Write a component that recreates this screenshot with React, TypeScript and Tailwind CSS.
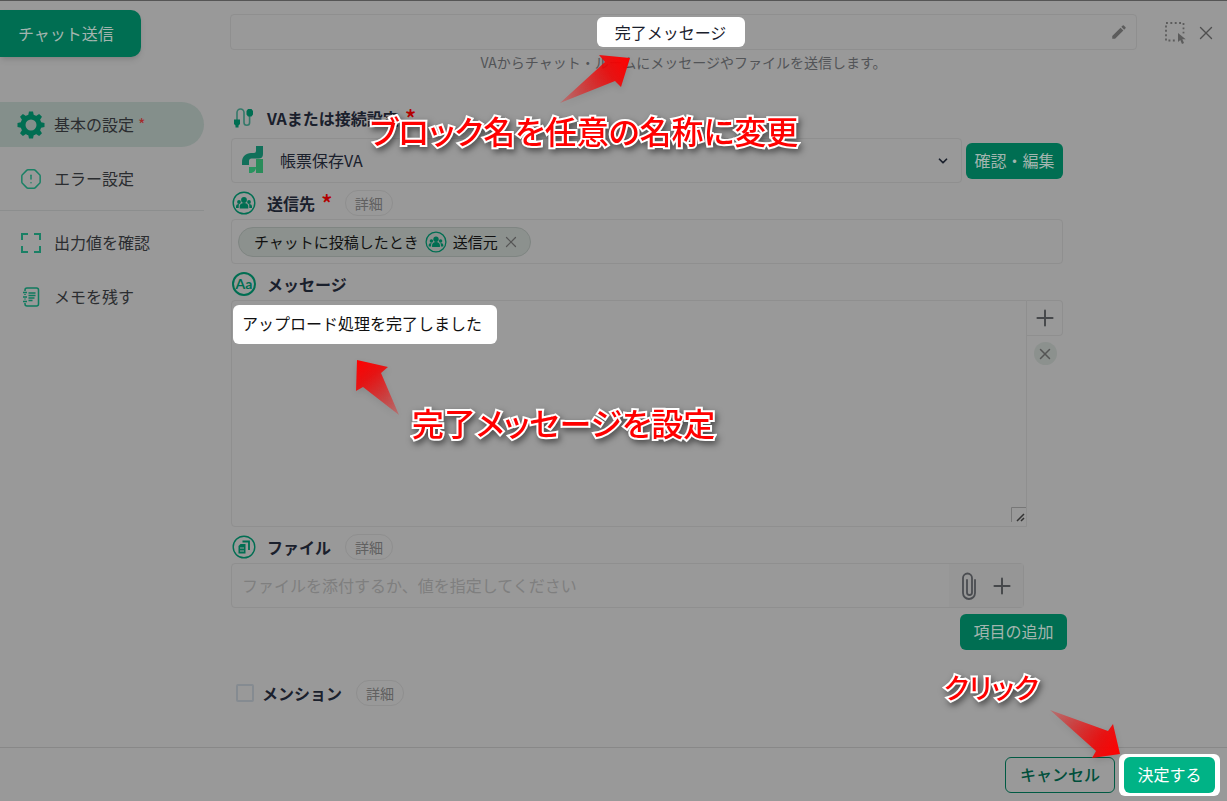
import { useState } from "react";
import type { ReactNode } from "react";
import { ChevronDown, OctagonAlert, Plus, X } from "lucide-react";
import { MdEdit } from "react-icons/md";

const annotationText =
  "pointer-events-none absolute whitespace-nowrap leading-9 text-[#ff0000] font-medium [font-feature-settings:'palt'] [-webkit-text-stroke:4px_white] [paint-order:stroke_fill] [filter:drop-shadow(2px_3px_3px_rgba(0,0,0,0.5))]";

function GearIcon() {
  return (
    <svg width="28" height="28" viewBox="0 0 28 28" fill="none" aria-hidden="true">
      <circle cx="14" cy="14" r="8" stroke="#006e52" strokeWidth="5" />
      {[0, 45, 90, 135, 180, 225, 270, 315].map((deg) => (
        <path key={deg} d="M11 5L12 .5h4L17 5z" fill="#006e52" transform={`rotate(${deg} 14 14)`} />
      ))}
    </svg>
  );
}

function FrameIcon() {
  return (
    <svg width="20" height="20" viewBox="0 0 20 20" fill="none" stroke="#1a8065" strokeWidth="2" aria-hidden="true">
      <path d="M1 7V1h6M13 1h6v6M19 13v6h-6M7 19H1v-6" />
    </svg>
  );
}

function NoteIcon() {
  return (
    <svg width="20" height="20" viewBox="0 0 20 20" fill="none" stroke="#0f7a5e" strokeWidth="1.5" aria-hidden="true">
      <path d="M4 4V3a2 2 0 0 1 2-2h9.500a2 2 0 0 1 2 2v14a2 2 0 0 1-2 2H6a2 2 0 0 1-2-2v-1M4 7v1M4 11.500v1" />
      <path d="M2 5.500h4M2 10h4M2 14.500h4M7.500 6h7M7.500 8.500h7M7.500 11h6M7.500 13.500h4" />
    </svg>
  );
}

function CableIcon() {
  return (
    <svg width="23" height="23" viewBox="0 0 23 23" fill="none" stroke="#34796a" strokeWidth="1.6" aria-hidden="true">
      <path d="M5 13V5.500a3.500 3.500 0 0 1 7 0v10a2.800 2.800 0 0 0 5.600 0V7" />
      <path d="M2 12.500h6v4.500L6.500 18.500v2h-3v-2L2 17zM14.500 7.500V4l1.500-2h3.500L21 4v3.500L19.500 9.500H16z" fill="#006e52" stroke="none" />
    </svg>
  );
}

function BrandLogo() {
  return (
    <svg width="22" height="28" viewBox="0 0 22 28" aria-hidden="true">
      <path d="M0 19v-3C0 10.500 4 7 9 7h3q2 0 2-2V0h7v8q0 4.500-4.500 4.500H9.500Q7 12.500 7 15v4z" fill="#11705a" />
      <path d="M14 13h7v14h-7z" fill="#2a8c5a" />
      <path d="M7 21h7c0 3.500-2 6-6 6H7z" fill="#299460" />
    </svg>
  );
}

function PeopleIcon({ size }: { size: number }) {
  return (
    <svg width={size} height={size} viewBox="0 0 24 24" fill="#006e52" aria-hidden="true">
      <circle cx="12" cy="12" r="10.800" fill="none" stroke="#006e52" strokeWidth="1.4" />
      <circle cx="12" cy="9" r="2.900" />
      <circle cx="7" cy="11" r="1.900" />
      <circle cx="17" cy="11" r="1.900" />
      <path d="M7.700 17.500v-2c0-2 1.500-3.500 4.300-3.500s4.300 1.500 4.300 3.500v2zM4 17v-1.500c0-1.700 1.200-2.500 3.300-2.500-.5.800-.6 1.600-.6 2.500V17zM20 17v-1.500c0-1.700-1.200-2.500-3.300-2.500.5.800.6 1.600.6 2.500V17z" />
    </svg>
  );
}

function FilesIcon() {
  return (
    <svg width="24" height="24" viewBox="0 0 24 24" fill="none" stroke="#006e52" aria-hidden="true">
      <circle cx="12" cy="12" r="10.800" strokeWidth="1.4" />
      <path d="M10.500 6.500h6.500V15" strokeWidth="1.800" />
      <path d="M8.500 9H13.500v9.500H6.500V11z" fill="#006e52" stroke="none" />
      <path d="M8 13h4M8 16h4" stroke="#999" strokeWidth="1.200" />
    </svg>
  );
}

function ClipIcon() {
  return (
    <svg width="16" height="28" viewBox="0 0 16 28" fill="none" stroke="#4b4d51" strokeWidth="1.8" strokeLinecap="round" aria-hidden="true">
      <path d="M14 8v13a6 6 0 0 1-12 0V6a4.500 4.500 0 0 1 9 0v14.500a2.500 2.500 0 0 1-5 0V8" />
    </svg>
  );
}

function SelectAreaIcon() {
  return (
    <svg width="22" height="22" viewBox="0 0 22 22" aria-hidden="true">
      <path d="M1 1h17.500v17.500H1z" fill="none" stroke="#5c5c5c" strokeWidth="1.800" strokeDasharray="1.900 2.475" />
      <path d="M11.500 11.500h10v10h-10z" fill="#999" />
      <path d="M13 11v9l2.300-2 1.700 4 2-1-1.700-3.700h3.400z" fill="#5c5c5c" />
    </svg>
  );
}

type ArrowProps = {
  id: string;
  className: string;
  width: number;
  height: number;
  d: string;
  from: [number, number];
  to: [number, number];
};

function Arrow({ id, className, width, height, d, from, to }: ArrowProps) {
  return (
    <svg
      width={width}
      height={height}
      viewBox={`0 0 ${width} ${height}`}
      className={`pointer-events-none absolute overflow-visible drop-shadow-md ${className}`}
      aria-hidden="true"
    >
      <defs>
        <linearGradient id={id} gradientUnits="userSpaceOnUse" x1={from[0]} y1={from[1]} x2={to[0]} y2={to[1]}>
          <stop offset="0" stopColor="#ff0000" stopOpacity="0.25" />
          <stop offset="0.7" stopColor="#f00505" stopOpacity="0.9" />
          <stop offset="1" stopColor="#ff0000" />
        </linearGradient>
      </defs>
      <path d={d} fill={`url(#${id})`} />
    </svg>
  );
}

function DetailButton() {
  return (
    <button type="button" className="h-[26px] rounded-full border border-[#8f8f8f] px-[9px] text-sm leading-6 text-[#606060]">
      詳細
    </button>
  );
}

function FieldLabel({ icon, htmlFor, required, children }: { icon: ReactNode; htmlFor: string; required?: boolean; children: string }) {
  return (
    <>
      <span className="flex w-9 pl-px">{icon}</span>
      <label htmlFor={htmlFor} className="flex font-bold text-[#1a202c]">
        {children}
        {required && <span className="ml-1.5 text-2xl leading-6 font-medium text-[#b30000]">*</span>}
      </label>
    </>
  );
}

const menu = [
  { label: "基本の設定", icon: <GearIcon />, active: true },
  { label: "エラー設定", icon: <OctagonAlert size={22} strokeWidth={1.6} color="#1a8065" /> },
  { label: "出力値を確認", icon: <FrameIcon />, divided: true },
  { label: "メモを残す", icon: <NoteIcon /> },
];

export default function App() {
  const [name, setName] = useState("完了メッセージ");
  const [message, setMessage] = useState("アップロード処理を完了しました");
  const [mention, setMention] = useState(false);

  return (
    <div className="relative flex min-h-screen flex-col overflow-hidden border-t border-[#555] bg-[#999] font-['Noto_Sans_CJK_JP',sans-serif] text-base leading-6 text-[#2b2d30]">
      {/* Header */}
      <header className="flex items-start">
        <div className="w-[230px] shrink-0 pt-[9px]">
          <div className="flex h-[47px] w-[141px] items-center rounded-r-[10px] bg-[#006e52] pb-0.5 pl-[18px] text-[#a3b5af] shadow-md">
            チャット送信
          </div>
        </div>
        <div className="min-w-0 flex-1 pt-[13px]">
          <div className="flex h-9 items-center rounded border border-[#8f8f8f] pr-2">
            <div className="flex flex-1 justify-center">
              <input
                aria-label="ブロック名"
                value={name}
                onChange={(e) => setName(e.target.value)}
                className="h-[30px] w-[148px] rounded-md bg-white text-center text-[#1a202c] outline-none"
              />
            </div>
            <button type="button" aria-label="編集">
              <MdEdit size={18} color="#5c5c5c" />
            </button>
          </div>
          <p className="text-center text-sm leading-6 text-[#525457]">
            VAからチャット・ルームにメッセージやファイルを送信します。
          </p>
        </div>
        <div className="flex w-[90px] items-center gap-2 pt-[21px] pl-7">
          <button type="button" aria-label="範囲選択">
            <SelectAreaIcon />
          </button>
          <button type="button" aria-label="閉じる">
            <X size={22} strokeWidth={1.5} color="#4f4f4f" />
          </button>
        </div>
      </header>

      <div className="flex flex-1 pt-7">
        {/* Side menu */}
        <nav className="flex w-[204px] shrink-0 flex-col gap-[9px]">
          {menu.map((item) => (
            <div key={item.label} className={item.divided ? "border-t border-[#8c8e8e] pt-[9px]" : ""}>
              <a
                href="#"
                className={`flex h-[45px] items-center pb-0.5 ${item.active ? "rounded-r-full bg-[#848f8b]" : ""}`}
              >
                <span className="flex w-[54px] justify-center pt-0.5 pl-2">{item.icon}</span>
                {item.label}
                {item.active && <span className="ml-1 text-base text-[#a52a2a]">*</span>}
              </a>
            </div>
          ))}
        </nav>

        {/* Settings form */}
        <main className="min-w-0 flex-1 pr-[164px] pl-[27px]">
          <div className="flex h-9 items-center pb-1">
            <FieldLabel icon={<CableIcon />} htmlFor="connection" required>
              VAまたは接続設定
            </FieldLabel>
          </div>
          <div className="flex items-center gap-1">
            <div className="relative min-w-0 flex-1">
              <span className="absolute top-2 left-[11px]">
                <BrandLogo />
              </span>
              <select
                id="connection"
                className="h-[45px] w-full appearance-none rounded border border-[#8f8f8f] bg-transparent pb-0.5 pl-12 text-[#1a202c]"
              >
                <option>帳票保存VA</option>
              </select>
              <ChevronDown size={14} strokeWidth={3} color="#1a202c" className="pointer-events-none absolute top-4 right-3" />
            </div>
            <button type="button" className="h-9 w-[97px] rounded-md bg-[#006e52] pb-0.5 text-[#a3b5af]">
              確認・編集
            </button>
          </div>

          <div className="flex h-9 items-center pt-1">
            <FieldLabel icon={<PeopleIcon size={24} />} htmlFor="destination" required>
              送信先
            </FieldLabel>
            <span className="ml-3 flex">
              <DetailButton />
            </span>
          </div>
          <div className="flex h-[45px] items-center rounded border border-[#8f8f8f] px-1.5">
            <div className="flex h-[30px] shrink-0 items-center rounded-full border border-[#7f8582] bg-[#8c918e] pr-2.5 pl-[15px] text-[15px] text-[#111]">
              チャットに投稿したとき
              <span className="mx-1.5">
                <PeopleIcon size={22} />
              </span>
              送信元
              <button type="button" aria-label="削除" className="ml-1">
                <X size={18} strokeWidth={1.6} color="#555" />
              </button>
            </div>
            <input id="destination" className="min-w-0 flex-1 bg-transparent outline-none" />
          </div>

          <div className="flex h-9 items-center pt-1">
            <FieldLabel
              icon={
                <span className="flex size-6 items-center justify-center rounded-full border-2 border-[#006e52] font-['Lato',sans-serif] text-sm leading-5 font-bold text-[#006e52]">
                  Aa
                </span>
              }
              htmlFor="message"
            >
              メッセージ
            </FieldLabel>
          </div>
          <div className="flex items-start">
            <div className="relative h-[227px] min-w-0 flex-1 rounded-l border border-[#8f8f8f]">
              <div className="absolute top-1 left-px h-[39px] w-[264px] rounded-md bg-white" />
              <textarea
                id="message"
                value={message}
                onChange={(e) => setMessage(e.target.value)}
                className="relative block h-full w-full resize-none bg-transparent px-2.5 py-2.5 text-[#111] outline-none"
              />
              <svg width="15" height="15" viewBox="0 0 15 15" fill="none" className="absolute right-0 bottom-1" aria-hidden="true">
                <path d="M.5 15V.5H15" stroke="#777" />
                <path d="M6 14l7-7M10 14l3-3" stroke="#333" strokeWidth="1.500" />
              </svg>
            </div>
            <div className="flex w-9 flex-col items-center gap-1.5">
              <button
                type="button"
                aria-label="値を追加"
                className="flex h-9 w-full items-center justify-center rounded-r border border-l-0 border-[#8f8f8f]"
              >
                <Plus size={26} strokeWidth={1.8} color="#46484b" />
              </button>
              <button type="button" aria-label="クリア" className="flex size-[23px] items-center justify-center rounded-full bg-[#8c918e]">
                <X size={18} strokeWidth={2} color="#555" />
              </button>
            </div>
          </div>

          <div className="flex h-9 items-center pt-1">
            <FieldLabel icon={<FilesIcon />} htmlFor="file">
              ファイル
            </FieldLabel>
            <span className="ml-3.5 flex">
              <DetailButton />
            </span>
          </div>
          <div className="mr-[39px] flex h-[45px] items-center rounded border border-[#8f8f8f]">
            <input
              id="file"
              placeholder="ファイルを添付するか、値を指定してください"
              className="h-full min-w-0 flex-1 bg-transparent px-2.5 pb-0.5 outline-none placeholder:text-[#7f7f7f]"
            />
            <div className="flex h-full w-[74px] items-center gap-3 bg-[#969696] pl-3">
              <button type="button" aria-label="ファイルを添付">
                <ClipIcon />
              </button>
              <button type="button" aria-label="値を指定">
                <Plus size={26} strokeWidth={1.8} color="#46484b" />
              </button>
            </div>
          </div>
          <div className="-mr-1 flex justify-end pt-1.5">
            <button type="button" className="h-9 w-[107px] rounded-md bg-[#006e52] pb-0.5 text-[#a3b5af]">
              項目の追加
            </button>
          </div>

          <div className="flex items-center pt-[30px]">
            <label className="flex items-center gap-2 pl-[5px] font-bold text-[#1a202c]">
              <input
                type="checkbox"
                checked={mention}
                onChange={(e) => setMention(e.target.checked)}
                className="size-[18px] appearance-none rounded-xs border-2 border-[#858b91] checked:bg-[#006e52]"
              />
              メンション
            </label>
            <span className="ml-3.5 flex">
              <DetailButton />
            </span>
          </div>
        </main>
      </div>

      {/* Footer */}
      <footer className="relative flex h-[54px] items-center justify-end gap-1 border-t border-[#888] pr-[7px]">
        <button type="button" className="h-9 w-[110px] rounded-md border border-[#005a43] pb-0.5 font-medium text-[#004f3b]">
          キャンセル
        </button>
        <div className="rounded-md bg-white px-[5px] py-[3px]">
          <button type="button" className="block h-9 w-[91px] rounded-md bg-[#00b386] pb-0.5 text-white">
            決定する
          </button>
        </div>
        <span className={`${annotationText} right-[188px] bottom-24 text-[28px]`}>クリック</span>
        <Arrow
          id="arrow-submit"
          className="right-[107px] bottom-[43px]"
          width={70}
          height={48}
          d="M0 0L58 21 63 14 70 44 42 48 46 41z"
          from={[0, 0]}
          to={[70, 44]}
        />
      </footer>

      {/* Step notes */}
      <span className={`${annotationText} top-[111px] left-[370px] text-[32px]`}>ブロック名を任意の名称に変更</span>
      <Arrow
        id="arrow-name"
        className="top-[53px] left-[560px]"
        width={70}
        height={49}
        d="M0 49L45 8 39 1 70 4 61 33 55 27z"
        from={[0, 49]}
        to={[70, 4]}
      />
      <span className={`${annotationText} top-[403px] left-[412px] text-[32px]`}>完了メッセージを設定</span>
      <Arrow
        id="arrow-message"
        className="top-[359px] left-[356px]"
        width={44}
        height={56}
        d="M1 0L32 7 25 13 43 55 7 27 0 31z"
        from={[43, 55]}
        to={[1, 0]}
      />
    </div>
  );
}
